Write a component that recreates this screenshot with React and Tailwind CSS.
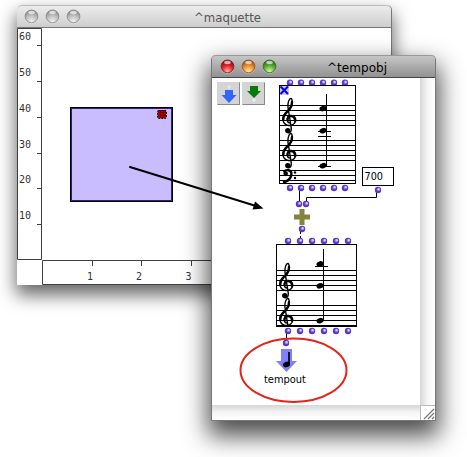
import React from 'react';

const buttonColors = {
  gray: ['#f0f0f0', '#bdbdbd', '#858585'],
  red: ['#ffb0a8', '#dc2029', '#751818'],
  orange: ['#ffe9a0', '#e58b32', '#8b4c18'],
  green: ['#d8f8a0', '#5aa638', '#2d651e'],
};

function WindowButton({ color }) {
  const [light, mid, dark] = buttonColors[color];
  return (
    <svg width="15" height="15" viewBox="0 0 15 15">
      <defs>
        <radialGradient id={`btn-${color}`} cx="50%" cy="88%" r="85%">
          <stop offset="0" stopColor={light} />
          <stop offset="0.55" stopColor={mid} />
          <stop offset="1" stopColor={dark} />
        </radialGradient>
      </defs>
      <circle cx="7.5" cy="8" r="6.8" fill="#fff" opacity=".5" />
      <circle cx="7.5" cy="7.4" r="6.4" fill={`url(#btn-${color})`} stroke={dark} strokeWidth=".8" />
      <ellipse cx="7.5" cy="3.5" rx="3.3" ry="1.7" fill="#fff" opacity=".65" />
    </svg>
  );
}

function Port({ x, y }) {
  return (
    <g>
      <circle cx={x} cy={y} r="3.2" fill="#5c36c8" />
      <circle cx={x + 0.5} cy={y - 0.6} r="1.7" fill="#9a90f4" />
      <circle cx={x + 0.7} cy={y - 0.8} r=".9" fill="#dcd8ff" />
    </g>
  );
}

function Ports({ xs, y }) {
  return xs.map((x) => <Port key={x} x={x} y={y} />);
}

function Treble({ x, y }) {
  return (
    <g transform={`translate(${x} ${y})`} fill="none" stroke="#000" strokeLinecap="round">
      <path d="M7.3 25C4.4 24 4.2 18.2 8.3 17.5C13.5 17 15.4 22.6 12 25.8C8.3 29.2 .9 27.4 .9 20.7C.8 15.2 7.6 12.5 9.7 7.6C10.7 5 10.2 .8 9.1 .4C7 .4 5.4 5.3 6 9.5L9.2 29.5C9.7 33.4 8.4 35 6.2 34.8" strokeWidth="1.4" />
      <path d="M1.3 21.6C1 16.5 5 14.2 7.6 11.2C9.4 9 10.2 6.7 10 4" strokeWidth="2.4" />
      <path d="M5.6 22.2C5.5 19.6 6.800 18 9 18.200C11.200 18.400 13 20.200 12.900 22.800" strokeWidth="2.2" />
      <circle cx="5.8" cy="32.6" r="2.7" fill="#000" stroke="none" />
    </g>
  );
}

function Head({ x, y }) {
  return <ellipse cx={x} cy={y} rx="3.6" ry="2.7" transform={`rotate(-18 ${x} ${y})`} fill="#000" />;
}

function Staff({ x1, x2, ys }) {
  return <path d={ys.map((y) => `M${x1} ${y + 0.5}H${x2}`).join('')} stroke="#000" />;
}

function Toolbar() {
  return (
    <div className="flex gap-0.5 pl-[5px] pt-[4px]">
      <div className="h-[23px] w-[23px] border border-[#d5d5d5] border-r-[#888] border-b-[#888] bg-[#d4d4d4]">
        <svg width="21" height="21">
          <path d="M7 7h8v5h3.5L11 20 3.5 12H7z" fill="#3264ff" />
          <circle cx="11" cy="4" r="1.7" fill="#e4e0ff" />
        </svg>
      </div>
      <div className="h-[23px] w-[23px] border border-[#d5d5d5] border-r-[#888] border-b-[#888] bg-[#d4d4d4]">
        <svg width="21" height="21">
          <path d="M7 3h8v5h3L11 15 4 8h3z" fill="#087c08" />
          <circle cx="11" cy="17" r="1.7" fill="#eeeaff" />
        </svg>
      </div>
    </div>
  );
}

const topPorts = [290, 301, 312, 323, 334, 345];
const lowPorts = [288, 300, 312, 324, 336, 348];

/* Patch nodes, drawn in screen coordinates through the viewBox. */
function Patch() {
  return (
    <svg className="absolute left-0 top-0" width="208" height="327" viewBox="212 78 208 327">
      <Ports xs={topPorts} y={82.7} />
      <rect x="279.5" y="85.5" width="76" height="98" fill="#fff" stroke="#000" />
      <Staff x1={280} x2={355} ys={[105, 110, 115, 120, 125, 140, 145, 150, 155, 160, 170, 175, 180]} />
      <Treble x={282} y={98} />
      <Treble x={282} y={133} />
      <g fill="none" stroke="#000">
        <circle cx="285.700" cy="173.800" r="2.300" fill="#000" stroke="none" />
        <path d="M284 172.500C285.500 168.700 292.200 169.500 291.300 175C290.600 179 287.400 181.400 283 182.700" strokeWidth="2.400" />
        <circle cx="295" cy="172.500" r="1.200" fill="#000" stroke="none" />
        <circle cx="295" cy="178" r="1.200" fill="#000" stroke="none" />
      </g>
      <path d="M326.5 94V166M318 131.5H331M318 136.5H331M318 166.5H331" stroke="#000" />
      <Head x={323} y={108.5} />
      <Head x={323} y={130.7} />
      <Head x={323} y={165.7} />
      <rect x="280" y="86" width="9" height="9" fill="#ccc" />
      <path d="M280.500 86.500L288 94M288 86.500L280.500 94" stroke="#0000ff" strokeWidth="2" />

      <path d="M299.5 189V202M376.5 191V197.5H306.5V202M300.5 231V234M300.5 236V239M286.5 333V341" stroke="#000" fill="none" />
      <Ports xs={topPorts} y={188} />
      <rect x="362.5" y="167.5" width="31" height="18" fill="#fff" stroke="#000" />
      <text x="364.5" y="180" fontSize="10.5" textLength="18.5" lengthAdjust="spacingAndGlyphs" fontFamily="DejaVu Sans, sans-serif">700</text>
      <Port x={378} y={190} />
      <Ports xs={[299, 306]} y={204} />
      <path d="M299.5 209h5v5.5h5.5v5h-5.5v5.5h-5v-5.5H294v-5h5.5z" fill="#84843f" />
      <Port x={302} y={229} />

      <Ports xs={lowPorts} y={241} />
      <rect x="276.5" y="244.5" width="80" height="82" fill="#fff" stroke="#000" />
      <Staff x1={277} x2={356} ys={[270, 275, 280, 285, 290, 305, 310, 315, 320, 325]} />
      <Treble x={279} y={263} />
      <g>
        <clipPath id="low-score"><rect x="277" y="245" width="79" height="81" /></clipPath>
        <g clipPath="url(#low-score)"><Treble x={279} y={298} /></g>
      </g>
      <path d="M323.5 249V321M315 266.5H328" stroke="#000" />
      <Head x={320} y={264} />
      <Head x={320} y={285.8} />
      <Head x={320} y={320.7} />
      <Ports xs={lowPorts} y={331} />
      <Port x={286} y={343} />

      <path d="M281 349h11v12h5L286.5 372 276 361h5z" fill="#8080ff" />
      <path d="M289 352V364" stroke="#000" strokeWidth="1.7" />
      <Head x={286.5} y={364.5} />
      <text x="264" y="383" fontSize="10.5" textLength="42" lengthAdjust="spacingAndGlyphs" fontFamily="DejaVu Sans, sans-serif">tempout</text>
      <ellipse cx="293.5" cy="370.3" rx="53" ry="31.7" fill="none" stroke="#e3241c" strokeWidth="2" />
    </svg>
  );
}

function Maquette() {
  return (
    <svg className="block" width="374" height="257" viewBox="17 28 374 257">
      <g fill="none" stroke="#404040">
        <path d="M17.5 28.5H41.5V259.5H17.5zM391 260.5H42.5V284.5H391" />
        <path d="M37 45.5H41M37 81.5H41M37 117.5H41M37 153.5H41M37 188.5H41M37 224.5H41M92.5 261V266M141.5 261V266M191.5 261V266" />
      </g>
      <g fontFamily="DejaVu Sans Mono, monospace" fontSize="10" fill="#333">
        <text x="19" y="40">60</text>
        <text x="19" y="76">50</text>
        <text x="19" y="112">40</text>
        <text x="19" y="148">30</text>
        <text x="19" y="183">20</text>
        <text x="19" y="219">10</text>
        <text x="87" y="280">1</text>
        <text x="136" y="280">2</text>
        <text x="185.5" y="280">3</text>
      </g>
      <rect x="70.5" y="107.5" width="102" height="94" fill="#c9bdff" stroke="#000" />
      <rect x="71.5" y="108.5" width="100" height="92" fill="none" stroke="#2e1f78" />
      <rect x="158" y="110" width="8" height="8" fill="#b00000" />
      <rect x="157.500" y="110.500" width="9" height="8" rx="1" fill="none" stroke="#000" strokeDasharray="2 1" />
      <path d="M160.500 110V118M163.500 110V118M158 112.500H166M158 115.500H166" stroke="#500" strokeWidth=".7" />
    </svg>
  );
}

export default function App() {
  return (
    <div className="relative h-[457px] w-[467px] overflow-hidden bg-white">
      <div className="absolute left-[17px] top-[5px] h-[280px] w-[375px] rounded-t-[5px] border-r border-[#777] bg-white shadow-[0_9px_18px_1px_rgba(0,0,0,0.6)]">
        <div className="relative flex h-[23px] items-center rounded-t-[5px] border-t border-b border-t-[#bbb] border-b-[#777] bg-linear-to-b from-[#ececec] to-[#cecece] pl-[7px]">
          <div className="flex gap-[6px]">
            <WindowButton color="gray" />
            <WindowButton color="gray" />
            <WindowButton color="gray" />
          </div>
          <svg className="ml-[111px]" width="80" height="20">
            <text x="2" y="15" fontSize="12.500" textLength="67" lengthAdjust="spacingAndGlyphs" fill="#555" fontFamily="DejaVu Sans, sans-serif">^maquette</text>
          </svg>
        </div>
        <Maquette />
      </div>

      <div className="absolute left-[211px] top-[55px] h-[366px] w-[225px] rounded-t-[5px] border-x border-b border-[#777] bg-white shadow-[0_12px_24px_3px_rgba(0,0,0,0.7)]">
        <div className="flex h-[23px] items-center rounded-t-[4px] border-t border-b border-t-[#999] border-b-[#444] bg-linear-to-b from-[#c6c6c6] to-[#929292] pl-2">
          <div className="flex gap-[6px]">
            <WindowButton color="red" />
            <WindowButton color="orange" />
            <WindowButton color="green" />
          </div>
          <svg className="ml-[46px]" width="70" height="20">
            <text x="4" y="15" fontSize="12.500" textLength="60" lengthAdjust="spacingAndGlyphs" fill="#000" fontFamily="DejaVu Sans, sans-serif">^tempobj</text>
          </svg>
        </div>
        <div className="flex">
          <div className="relative h-[327px] w-[208px] bg-white">
            <Patch />
            <Toolbar />
          </div>
          <div className="w-[15px] bg-linear-to-r from-[#d6d6d6] via-[#f5f5f5] to-white" />
        </div>
        <div className="flex h-[15px]">
          <div className="w-[208px] bg-linear-to-b from-[#d6d6d6] via-[#f5f5f5] to-white" />
          <div className="w-[15px] border-t border-l border-[#bbb] bg-white">
            <svg width="14" height="14">
              <path d="M3 13L13 3M7 13L13 7M11 13L13 11" stroke="#777" strokeWidth="1.2" />
            </svg>
          </div>
        </div>
      </div>

      <svg className="pointer-events-none absolute left-0 top-0" width="467" height="457">
        <path d="M130 167L256 206" stroke="#000" strokeWidth="2" strokeLinecap="round" />
        <path d="M263.5 208.5L252.500 209.500L255 201.500z" fill="#000" />
      </svg>
    </div>
  );
}
